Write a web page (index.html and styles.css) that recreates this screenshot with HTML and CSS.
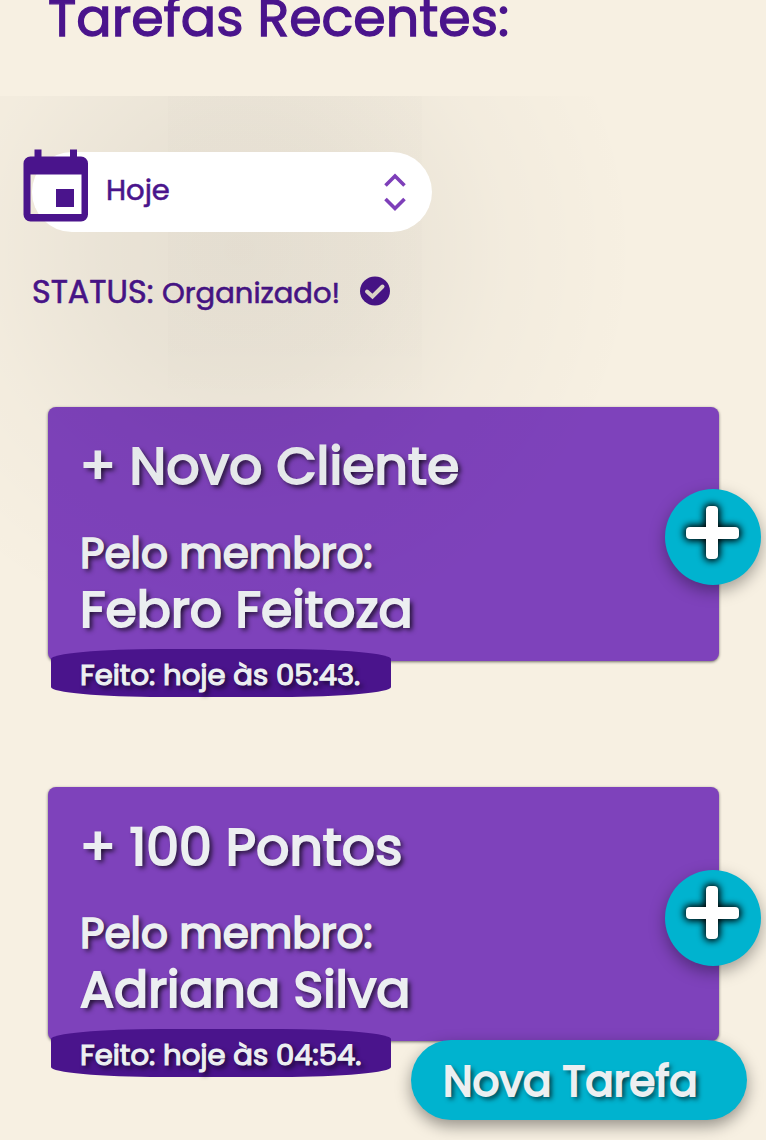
FILE: index.html
```html
<!DOCTYPE html>
<html lang="pt-BR">
<head>
<meta charset="utf-8">
<title>Tarefas Recentes</title>
<link rel="stylesheet" href="styles.css">
</head>
<body>
<main class="page">
  <h1 class="title">Tarefas Recentes:</h1>
  <div class="select">
    <svg class="calendar" width="66" height="74" viewBox="0 0 66 74">
      <path fill="#4a148c" fill-rule="evenodd" d="M11.500 1.500h7v7h28.500v-7h7v7h4a7 7 0 0 1 7 7v51a7 7 0 0 1-7 7H7.500a7 7 0 0 1-7-7V15.500a7 7 0 0 1 7-7h4zM7.500 26.500v39.500h51V26.500zM33 41h18v18H33z"/>
    </svg>
    <span class="select-value">Hoje</span>
    <svg class="arrows" width="24" height="40" viewBox="0 0 24 40" fill="none" stroke="#7e3fb9" stroke-width="3.600">
      <path d="M2.500 13.500l9.500-9.500 9.500 9.500M2.500 27l9.500 9.500 9.500-9.500"/>
    </svg>
  </div>
  <p class="status">
    <span class="status-label">STATUS:</span>
    <span class="status-value">Organizado!</span>
    <svg class="check" width="30" height="30" viewBox="0 0 30 30">
      <ellipse cx="15" cy="15" rx="15" ry="14.500" fill="#4a148c"/>
      <path d="M7 15.500l5.500 5 10-10" fill="none" stroke="#e7dfd2" stroke-width="4" stroke-linecap="round"/>
    </svg>
  </p>
  <section class="card">
    <h2 class="card-title">+ Novo Cliente</h2>
    <p class="by">Pelo membro:</p>
    <p class="member">Febro Feitoza</p>
    <span class="done">Feito: hoje às 05:43.</span>
    <button class="plus" aria-label="Adicionar"></button>
  </section>
  <section class="card">
    <h2 class="card-title card-title-low">+ 100 Pontos</h2>
    <p class="by">Pelo membro:</p>
    <p class="member">Adriana Silva</p>
    <span class="done">Feito: hoje às 04:54.</span>
    <button class="plus plus-low" aria-label="Adicionar"></button>
  </section>
  <div class="glow"></div>
  <button class="new-task">Nova Tarefa</button>
</main>
</body>
</html>
```
FILE: styles.css
```css
* { box-sizing: border-box; }
body {
  margin: 0;
  background: #f7f0e2;
  color: #4a148c;
  font-family: Poppins, Inter, "Open Sans", sans-serif;
}
h1, h2, p { margin: 0; white-space: nowrap; }
.page {
  position: relative;
  width: 766px;
  height: 1140px;
  overflow: hidden;
}
.title {
  height: 152px;
  padding-left: 48px;
  font-size: 52.300px;
  font-weight: 400;
  line-height: 36px;
  -webkit-text-stroke: 1.3px currentColor;
}
.select {
  position: relative;
  z-index: 1;
  display: flex;
  align-items: center;
  justify-content: space-between;
  width: 400px;
  height: 80px;
  margin-left: 32px;
  padding: 0 25px 0 74px;
  border-radius: 40px;
  background: #fff;
}
.calendar { position: absolute; left: -9px; top: -4px; }
.select-value { font-size: 29px; margin-top: -3px; -webkit-text-stroke: .6px currentColor; }
.status {
  display: flex;
  align-items: flex-end;
  height: 79px;
  padding-left: 32px;
  line-height: 37px;
  -webkit-text-stroke: .6px currentColor;
}
.status-label { width: 130px; font-size: 31.800px; }
.status-value { width: 198px; font-size: 29px; line-height: 36px; }
.check { margin-bottom: 5px; }
.card {
  position: relative;
  width: 671px;
  height: 254px;
  margin: 96px 0 126px 48px;
  padding: 23px 32px;
  border-radius: 8px;
  background: #7e42bb;
  box-shadow: 0 1px 3px rgba(0, 0, 0, .55);
  color: #eceff1;
  font-weight: 400;
  text-shadow: 3px 3px 5px rgba(0, 0, 0, .85);
  -webkit-text-stroke: 2px currentColor;
}
.card + .card { margin-bottom: 0; }
.card-title { height: 94px; font-size: 52.200px; font-weight: 400; line-height: 71px; }
.card-title-low { line-height: 73px; }
.by { height: 58px; font-size: 42.200px; line-height: 59px; -webkit-text-stroke-width: 1.7px; }
.member { font-size: 50.500px; line-height: 55px; }
.done {
  position: absolute;
  left: 3px;
  top: 242px;
  width: 340px;
  height: 48px;
  padding-left: 29px;
  border-radius: 110px / 10px;
  background: #4a148c;
  font-size: 29.100px;
  line-height: 51px;
  white-space: nowrap;
  -webkit-text-stroke-width: 1.2px;
}
.plus {
  position: absolute;
  left: 617px;
  top: 82px;
  width: 96px;
  height: 96px;
  padding: 0;
  border: 0;
  border-radius: 50%;
  background: #00b3cf;
  box-shadow: 0 6px 16px rgba(0, 0, 0, .35);
}
.plus-low { top: 83px; }
.plus::before, .plus::after {
  content: "";
  position: absolute;
  border-radius: 4px;
  background: #fff;
}
.plus::before { left: 21px; top: 38px; width: 53px; height: 12px; box-shadow: 0 0 7px 2px #000; }
.plus::after { left: 41px; top: 17px; width: 12px; height: 53px; box-shadow: 0 0 7px 2px #000; clip-path: polygon(-12px -12px, 24px -12px, 24px 21px, 12px 21px, 12px 33px, 24px 33px, 24px 65px, -12px 65px, -12px 33px, 0 33px, 0 21px, -12px 21px); }
.plus-low::before { top: 37px; }
.plus-low::after { top: 16px; }
.glow {
  position: absolute;
  inset: 96px 0 auto;
  height: 600px;
  background:
    linear-gradient(rgba(0, 0, 10, .006), rgba(0, 0, 10, .006) 250px, transparent) 168px 0 / 254px 310px no-repeat,
    radial-gradient(circle at 240px 154px, rgba(0, 0, 0, .07), rgba(0, 0, 0, .053) 130px, rgba(0, 0, 0, .02) 260px, transparent 400px);
  pointer-events: none;
}
.new-task {
  position: absolute;
  left: 411px;
  top: 1040px;
  width: 336px;
  height: 80px;
  padding: 2px 0 0 32px;
  border: 0;
  border-radius: 40px;
  background: #00b3cf;
  box-shadow: 0 6px 16px rgba(0, 0, 0, .4);
  color: #eceff1;
  font: 400 42px/79px Poppins, Inter, sans-serif;
  text-align: left;
  text-shadow: 3px 3px 5px rgba(0, 0, 0, .8);
  white-space: nowrap;
  -webkit-text-stroke: 1.9px currentColor;
}
```
